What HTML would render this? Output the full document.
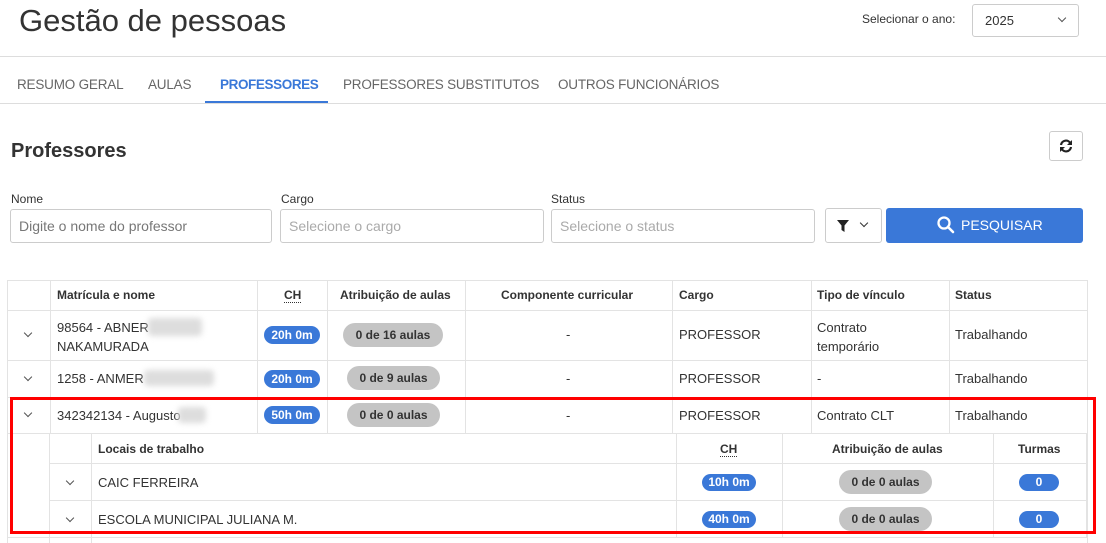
<!DOCTYPE html>
<html><head><meta charset="utf-8"><style>
*{box-sizing:border-box;margin:0;padding:0}
body{width:1106px;height:543px;overflow:hidden;background:#fff;font-family:"Liberation Sans",sans-serif;color:#333;position:relative;font-size:13px}
.a{position:absolute;white-space:nowrap}
.tab{position:absolute;top:77px;font-size:13.5px;color:#666;letter-spacing:-0.2px}
.lbl{position:absolute;top:192px;font-size:12px;color:#333}
.inp{position:absolute;top:209px;height:34px;border:1px solid #ccc;border-radius:3px;padding:0 8px;line-height:32px;font-size:14px;color:#999}
.vl{position:absolute;width:1px;background:#e3e3e3}
.hl{position:absolute;height:1px;background:#e3e3e3}
.th{position:absolute;font-size:12px;font-weight:bold;color:#333}
.td{position:absolute;font-size:13px;color:#333}
.bb{position:absolute;background:#3a78d8;color:#fff;font-weight:bold;font-size:12px;border-radius:10px;height:18px;line-height:18px;text-align:center}
.gb{position:absolute;background:#c4c4c4;color:#333;font-weight:bold;font-size:12px;border-radius:12px;height:24px;line-height:24px;text-align:center}
.chev{position:absolute;width:6px;height:6px;border-right:1.5px solid #555;border-bottom:1.5px solid #555;transform:rotate(45deg)}
.blur{position:absolute;background:#ddd;filter:blur(3px);border-radius:4px}
</style></head><body>
<div class="a" style="left:19px;top:3px;font-size:31px;color:#333">Gestão de pessoas</div>
<div class="a" style="left:862px;top:12px;font-size:12px;color:#333">Selecionar o ano:</div>
<div class="a" style="left:972px;top:4px;width:107px;height:33px;border:1px solid #ccc;border-radius:3px;padding-left:12px;line-height:31px;font-size:13px">2025</div>
<div class="chev" style="left:1059px;top:15px"></div>
<div class="hl" style="left:0;top:56px;width:1106px;background:#ddd"></div>
<div class="tab" style="left:17px">RESUMO GERAL</div>
<div class="tab" style="left:148px">AULAS</div>
<div class="tab" style="left:220px;color:#3a78d8;font-weight:bold;letter-spacing:-0.4px">PROFESSORES</div>
<div class="tab" style="left:343px">PROFESSORES SUBSTITUTOS</div>
<div class="tab" style="left:558px">OUTROS FUNCIONÁRIOS</div>
<div class="hl" style="left:0;top:103px;width:1106px;background:#ddd"></div>
<div class="a" style="left:205px;top:101px;width:123px;height:2px;background:#3a78d8"></div>
<div class="a" style="left:11px;top:140px;font-size:20px;font-weight:bold;color:#333">Professores</div>
<div class="a" style="left:1049px;top:131px;width:34px;height:30px;border:1px solid #ccc;border-radius:3px"></div>
<svg class="a" style="left:1059px;top:139px" width="14" height="14" viewBox="0 0 14 14"><path d="M2 6A5 5 0 0 1 11.5 4.5" stroke="#222" stroke-width="2.2" fill="none"/><path d="M13 1V6H8Z" fill="#222"/><path d="M12 8A5 5 0 0 1 2.5 9.5" stroke="#222" stroke-width="2.2" fill="none"/><path d="M1 13V8H6Z" fill="#222"/></svg>
<div class="lbl" style="left:11px">Nome</div>
<div class="lbl" style="left:281px">Cargo</div>
<div class="lbl" style="left:551px">Status</div>
<div class="inp" style="left:10px;width:262px;color:#777">Digite o nome do professor</div>
<div class="inp" style="left:280px;width:264px;color:#aaa">Selecione o cargo</div>
<div class="inp" style="left:551px;width:264px;color:#aaa">Selecione o status</div>
<div class="a" style="left:825px;top:208px;width:57px;height:35px;border:1px solid #ccc;border-radius:3px"></div>
<svg class="a" style="left:837px;top:220px" width="12" height="12" viewBox="0 0 12 12"><path d="M0 0H12L7.5 5.5V12L4.5 10V5.5Z" fill="#222"/></svg>
<div class="chev" style="left:861px;top:220px;border-color:#333"></div>
<div class="a" style="left:886px;top:208px;width:197px;height:35px;background:#3a78d8;border-radius:3px;color:#fff;font-size:14px;line-height:35px;padding-left:75px">PESQUISAR</div>
<svg class="a" style="left:937px;top:216px" width="18" height="18" viewBox="0 0 18 18"><circle cx="7" cy="7" r="5.5" stroke="#fff" stroke-width="2.3" fill="none"/><path d="M11 11L16 16" stroke="#fff" stroke-width="2.6" stroke-linecap="round"/></svg>

<div class="hl" style="left:7px;top:280px;width:1080px"></div>
<div class="hl" style="left:7px;top:310px;width:1080px"></div>
<div class="hl" style="left:7px;top:360px;width:1080px"></div>
<div class="hl" style="left:7px;top:397px;width:1080px"></div>
<div class="hl" style="left:7px;top:433px;width:1080px"></div>
<div class="hl" style="left:7px;top:537px;width:1080px"></div>
<div class="vl" style="left:7px;top:280px;height:263px"></div>
<div class="vl" style="left:50px;top:280px;height:153px"></div>
<div class="vl" style="left:257px;top:280px;height:153px"></div>
<div class="vl" style="left:327px;top:280px;height:153px"></div>
<div class="vl" style="left:465px;top:280px;height:153px"></div>
<div class="vl" style="left:672px;top:280px;height:153px"></div>
<div class="vl" style="left:811px;top:280px;height:153px"></div>
<div class="vl" style="left:949px;top:280px;height:153px"></div>
<div class="vl" style="left:1087px;top:280px;height:263px"></div>

<div class="th" style="left:57px;top:288px">Matrícula e nome</div>
<div class="th" style="left:284px;top:288px;border-bottom:1px dotted #333">CH</div>
<div class="th" style="left:340px;top:288px">Atribuição de aulas</div>
<div class="th" style="left:501px;top:288px">Componente curricular</div>
<div class="th" style="left:679px;top:288px">Cargo</div>
<div class="th" style="left:817px;top:288px">Tipo de vínculo</div>
<div class="th" style="left:955px;top:288px">Status</div>

<div class="chev" style="left:25px;top:330px"></div>
<div class="td" style="left:57px;top:318px;line-height:19px">98564 - ABNER<br>NAKAMURADA</div>
<div class="blur" style="left:148px;top:318px;width:54px;height:18px"></div>
<div class="bb" style="left:264px;top:326px;width:56px">20h 0m</div>
<div class="gb" style="left:343px;top:323px;width:100px">0 de 16 aulas</div>
<div class="td" style="left:566px;top:327px">-</div>
<div class="td" style="left:679px;top:327px">PROFESSOR</div>
<div class="td" style="left:817px;top:318px;line-height:19px">Contrato<br>temporário</div>
<div class="td" style="left:955px;top:327px">Trabalhando</div>

<div class="chev" style="left:25px;top:374px"></div>
<div class="td" style="left:57px;top:371px">1258 - ANMER</div>
<div class="blur" style="left:144px;top:370px;width:70px;height:16px"></div>
<div class="bb" style="left:264px;top:370px;width:56px">20h 0m</div>
<div class="gb" style="left:347px;top:366px;width:93px">0 de 9 aulas</div>
<div class="td" style="left:566px;top:371px">-</div>
<div class="td" style="left:679px;top:371px">PROFESSOR</div>
<div class="td" style="left:817px;top:371px">-</div>
<div class="td" style="left:955px;top:371px">Trabalhando</div>

<div class="chev" style="left:25px;top:410px"></div>
<div class="td" style="left:57px;top:408px">342342134 - Augusto</div>
<div class="blur" style="left:178px;top:407px;width:28px;height:16px"></div>
<div class="bb" style="left:264px;top:406px;width:56px">50h 0m</div>
<div class="gb" style="left:347px;top:403px;width:93px">0 de 0 aulas</div>
<div class="td" style="left:566px;top:408px">-</div>
<div class="td" style="left:679px;top:408px">PROFESSOR</div>
<div class="td" style="left:817px;top:408px">Contrato CLT</div>
<div class="td" style="left:955px;top:408px">Trabalhando</div>

<div class="vl" style="left:49px;top:433px;height:110px"></div>
<div class="vl" style="left:91px;top:433px;height:110px"></div>
<div class="vl" style="left:676px;top:433px;height:105px"></div>
<div class="vl" style="left:782px;top:433px;height:105px"></div>
<div class="vl" style="left:993px;top:433px;height:105px"></div>
<div class="vl" style="left:1086px;top:433px;height:105px"></div>
<div class="hl" style="left:49px;top:463px;width:1037px"></div>
<div class="hl" style="left:49px;top:500px;width:1037px"></div>
<div class="th" style="left:98px;top:442px">Locais de trabalho</div>
<div class="th" style="left:720px;top:442px;border-bottom:1px dotted #333">CH</div>
<div class="th" style="left:832px;top:442px">Atribuição de aulas</div>
<div class="th" style="left:1018px;top:442px">Turmas</div>
<div class="chev" style="left:67px;top:478px"></div>
<div class="td" style="left:98px;top:475px">CAIC FERREIRA</div>
<div class="bb" style="left:702px;top:474px;width:54px;height:17px;line-height:17px">10h 0m</div>
<div class="gb" style="left:839px;top:470px;width:93px">0 de 0 aulas</div>
<div class="bb" style="left:1019px;top:474px;width:40px;height:17px;line-height:17px">0</div>
<div class="chev" style="left:67px;top:515px"></div>
<div class="td" style="left:98px;top:512px">ESCOLA MUNICIPAL JULIANA M.</div>
<div class="bb" style="left:702px;top:511px;width:54px;height:17px;line-height:17px">40h 0m</div>
<div class="gb" style="left:839px;top:507px;width:93px">0 de 0 aulas</div>
<div class="bb" style="left:1019px;top:511px;width:40px;height:17px;line-height:17px">0</div>

<div class="a" style="left:10px;top:397px;width:1086px;height:137px;border:3px solid #f00"></div>
</body></html>
